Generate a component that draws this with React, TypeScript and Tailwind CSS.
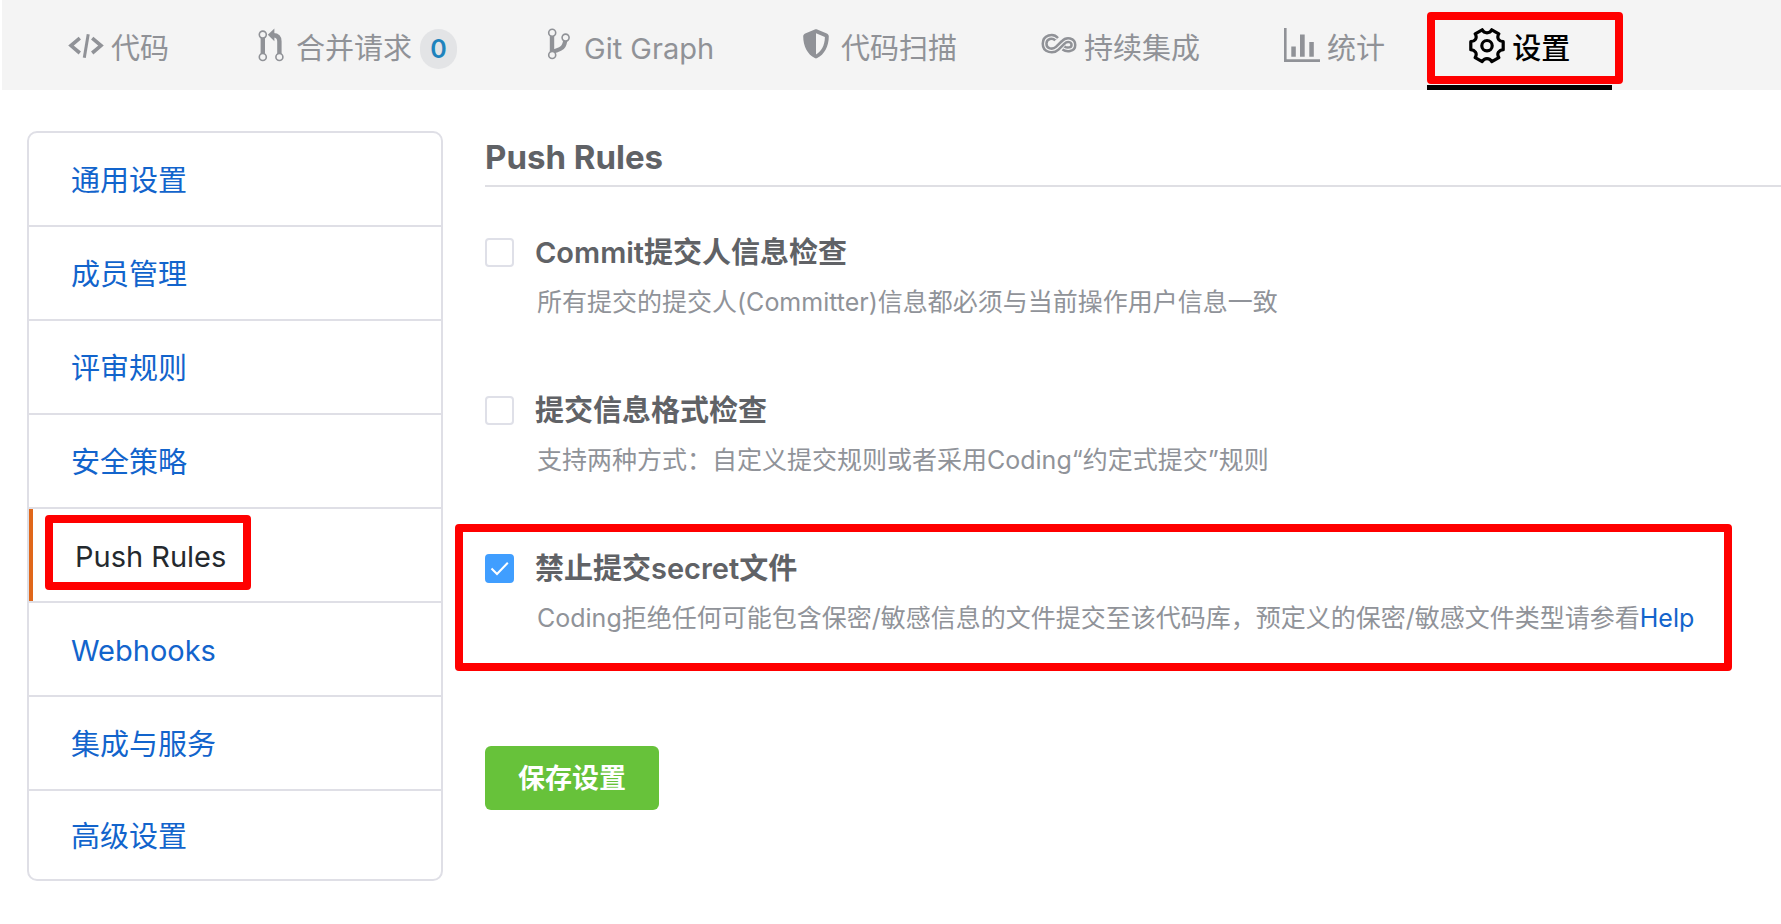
import { useState } from "react";
import type { ReactNode } from "react";

const glyph = "block w-9 h-9 shrink-0";

function CodeIcon() {
  return (
    <svg className={glyph} viewBox="0 0 36 36" fill="none" stroke="currentColor" aria-hidden="true">
      <path d="M11.8 10.2 3 17.6l8.8 7.4M24.2 10.2 33 17.6 24.2 25" strokeWidth="3.6" />
      <path d="M20.2 6.3 16.3 29.8" strokeWidth="3" />
    </svg>
  );
}

function MergeIcon() {
  return (
    <svg className={glyph} viewBox="0 0 36 36" fill="none" stroke="currentColor" aria-hidden="true">
      <path d="M9.8 8v20" strokeWidth="4.4" />
      <path d="M26.4 28V13.5c0-4-2-6.3-6-6.3H19" strokeWidth="4.4" />
      <path d="M14.8 6.8 21.4.4v12.8z" fill="currentColor" stroke="none" />
      <g fill="#f4f4f4" strokeWidth="1.6">
        <circle cx="9.8" cy="6.6" r="3.5" />
        <circle cx="9.8" cy="29" r="3.5" />
        <circle cx="26.4" cy="29" r="3.5" />
      </g>
    </svg>
  );
}

function BranchIcon() {
  return (
    <svg className={glyph} viewBox="0 0 36 36" fill="none" stroke="currentColor" aria-hidden="true">
      <path d="M11 6v20" strokeWidth="4.4" />
      <path d="M11 24c6-3 12.5-1 13.4-13" strokeWidth="4.2" />
      <g fill="#f4f4f4" strokeWidth="1.6">
        <circle cx="11.2" cy="4.8" r="3.5" />
        <circle cx="11.2" cy="27" r="3.5" />
        <circle cx="24.6" cy="9.6" r="3.5" />
      </g>
    </svg>
  );
}

function ShieldIcon() {
  return (
    <svg className={glyph} viewBox="0 0 36 36" aria-hidden="true">
      <path
        fill="currentColor"
        fillRule="evenodd"
        d="M16.8 1.5c.8-.3 1.6-.3 2.4 0l9.6 3.9c1.2.5 2 1.6 2 2.9 0 10.4-4.6 18.3-11.6 21.8-.8.4-1.6.4-2.4 0C9.8 26.6 5.2 18.7 5.2 8.3c0-1.3.8-2.4 2-2.9zM18 5.2v21.2c5-2.7 8.8-8.7 8.9-17.5z"
      />
    </svg>
  );
}

function InfinityIcon() {
  const loop =
    "M15.6 11.2C11.7 6.8 3.6 8.8 3.6 15.8S12 24.2 16.2 20.2L22 14.6C26 10.4 32.4 12 32.4 17S25.8 22.2 22.4 20";
  return (
    <svg className={glyph} viewBox="0 0 36 36" fill="none" aria-hidden="true">
      <path d={loop} stroke="currentColor" strokeWidth="6.2" />
      <path d={loop} stroke="#f4f4f4" strokeWidth="1.2" />
    </svg>
  );
}

function ChartIcon() {
  return (
    <svg className={glyph} viewBox="0 0 36 36" fill="currentColor" aria-hidden="true">
      <path d="M0 0h2.6v31.2H36V34H0z" />
      <path d="M7.3 18.5h4.5v10.3H7.3zM16 6.5h4.7v22.3H16zM25.3 14h4.5v14.8h-4.5z" />
    </svg>
  );
}

function GearIcon() {
  return (
    <svg
      className={glyph}
      viewBox="0 0 36 36"
      fill="none"
      stroke="currentColor"
      strokeWidth="3.2"
      strokeLinejoin="round"
      aria-hidden="true"
    >
      <path d="M13.2 1.8C14.4 4 16 4.800 18 4.800S21.600 4 22.800 1.800L29.800 5.800C28.400 8.400 28.600 10 29.500 11.300S31.500 13.500 34.200 13.700V21.700C31.500 21.900 30.400 22.800 29.500 24.100S28.400 27 29.800 29.600L22.800 33.600C21.600 31.400 20 30.600 18 30.600S14.400 31.400 13.200 33.600L6.200 29.600C7.600 27 7.400 25.400 6.500 24.100S4.500 21.900 1.800 21.700V13.700C4.500 13.500 5.600 12.600 6.500 11.300S7.600 8.400 6.200 5.800Z" />
      <circle cx="18" cy="17.7" r="5.2" />
    </svg>
  );
}

type Tab = { label: string; icon: ReactNode; count?: number; active?: boolean };

const tabs: Tab[] = [
  { label: "代码", icon: <CodeIcon /> },
  { label: "合并请求", icon: <MergeIcon />, count: 0 },
  { label: "Git Graph", icon: <BranchIcon /> },
  { label: "代码扫描", icon: <ShieldIcon /> },
  { label: "持续集成", icon: <InfinityIcon /> },
  { label: "统计", icon: <ChartIcon /> },
  { label: "设置", icon: <GearIcon />, active: true },
];

const sections = ["通用设置", "成员管理", "评审规则", "安全策略", "Push Rules", "Webhooks", "集成与服务", "高级设置"];

function TopNav() {
  return (
    <nav className="ml-[2px] flex h-[90px] bg-[#f4f4f4] pl-6 text-[29px] leading-10 text-[#909297]">
      {tabs.map((tab) => (
        <a
          key={tab.label}
          href="#"
          aria-current={tab.active ? "page" : undefined}
          className={
            tab.active
              ? "relative flex shrink-0 items-center gap-[7px] whitespace-nowrap border-b-[5px] border-black px-[42px] pt-3 font-medium text-black"
              : "flex shrink-0 items-center gap-[7px] whitespace-nowrap border-b-[5px] border-transparent px-[42px] pt-3"
          }
        >
          <span className="pb-[6px]">{tab.icon}</span>
          <span>{tab.label}</span>
          {tab.count !== undefined && (
            <span className="ml-px flex h-10 w-[37px] items-center justify-center rounded-full bg-[#e3e4e6] text-[25px] font-semibold text-[#1f83bd]">
              {tab.count}
            </span>
          )}
          {tab.active && (
            <span className="pointer-events-none absolute -right-[11px] bottom-px left-0 top-3 rounded-[4px] border-8 border-[#ff0000]" />
          )}
        </a>
      ))}
    </nav>
  );
}

function Sidebar() {
  return (
    <aside className="w-[416px] shrink-0 overflow-hidden rounded-[10px] border-2 border-[#dfdfe6]">
      <ul className="divide-y-2 divide-[#dfdfe6] text-[29px] leading-10">
        {sections.map((name) => (
          <li key={name} className="group">
            {name === "Push Rules" ? (
              <a
                href="#"
                aria-current="page"
                className="relative flex h-[92px] items-center border-l-4 border-[#e0671a] px-[42px] pt-1 text-[#24292e]"
              >
                {name}
                <span className="pointer-events-none absolute left-3 top-[6px] h-[75px] w-[206px] rounded-[4px] border-8 border-[#ff0000]" />
              </a>
            ) : (
              <a
                href="#"
                className="flex h-[92px] items-center px-[42px] pt-1 text-[#1264cc] group-last:h-[88px]"
              >
                {name}
              </a>
            )}
          </li>
        ))}
      </ul>
    </aside>
  );
}

type RuleProps = {
  id: string;
  title: string;
  defaultChecked?: boolean;
  highlighted?: boolean;
  children: ReactNode;
};

function Rule({ id, title, defaultChecked = false, highlighted = false, children }: RuleProps) {
  const [checked, setChecked] = useState(defaultChecked);
  return (
    <div className="relative w-fit">
      <div className="flex items-center gap-[21px]">
        <span className="grid shrink-0">
          <input
            id={id}
            type="checkbox"
            checked={checked}
            onChange={(e) => setChecked(e.target.checked)}
            aria-describedby={`${id}-note`}
            className="col-start-1 row-start-1 size-[29px] appearance-none rounded-[4px] border-2 border-[#dfe0e8] bg-white checked:border-[#409eff] checked:bg-[#409eff]"
          />
          {checked && (
            <svg
              className="pointer-events-none col-start-1 row-start-1 size-[29px]"
              viewBox="0 0 29 29"
              fill="none"
              stroke="white"
              strokeWidth="2"
              aria-hidden="true"
            >
              <path d="M6.5 14.5 12 20 22.8 8.8" />
            </svg>
          )}
        </span>
        <label htmlFor={id} className="pt-[2px] text-[29px] font-semibold leading-10 text-[#606266]">
          {title}
        </label>
      </div>
      <p id={`${id}-note`} className="ml-[52px] mt-3 text-[25px] leading-[34px] text-[#909399]">
        {children}
      </p>
      {highlighted && (
        <span className="pointer-events-none absolute -bottom-9 -left-[30px] -right-[38px] -top-[23px] rounded-[4px] border-8 border-[#ff0000]" />
      )}
    </div>
  );
}

export default function App() {
  return (
    <div className="min-h-screen overflow-x-hidden bg-white font-['Inter','Noto_Sans_CJK_SC',sans-serif]" lang="zh-CN">
      <TopNav />
      <div className="flex items-start gap-[42px] pl-[27px] pt-[41px]">
        <Sidebar />
        <main className="min-w-0 grow pt-[6px]">
          <h1 className="border-b-2 border-[#dfdfe4] pb-2 text-[33px] font-bold leading-10 text-[#606266]">
            Push Rules
          </h1>
          <form onSubmit={(e) => e.preventDefault()}>
            <div className="flex flex-col gap-[70px] pt-11">
              <Rule id="committer" title="Commit提交人信息检查">
                所有提交的提交人(Committer)信息都必须与当前操作用户信息一致
              </Rule>
              <Rule id="format" title="提交信息格式检查">
                支持两种方式：自定义提交规则或者采用Coding“约定式提交”规则
              </Rule>
              <Rule id="secret" title="禁止提交secret文件" defaultChecked highlighted>
                Coding拒绝任何可能包含保密/敏感信息的文件提交至该代码库，预定义的保密/敏感文件类型请参看
                <a href="#" className="text-[#1264cc]">
                  Help
                </a>
              </Rule>
            </div>
            <button
              type="submit"
              className="mt-[111px] h-16 rounded-[6px] bg-[#67c23a] px-[33px] pt-[2px] text-[27px] font-bold leading-10 text-white"
            >
              保存设置
            </button>
          </form>
        </main>
      </div>
    </div>
  );
}
